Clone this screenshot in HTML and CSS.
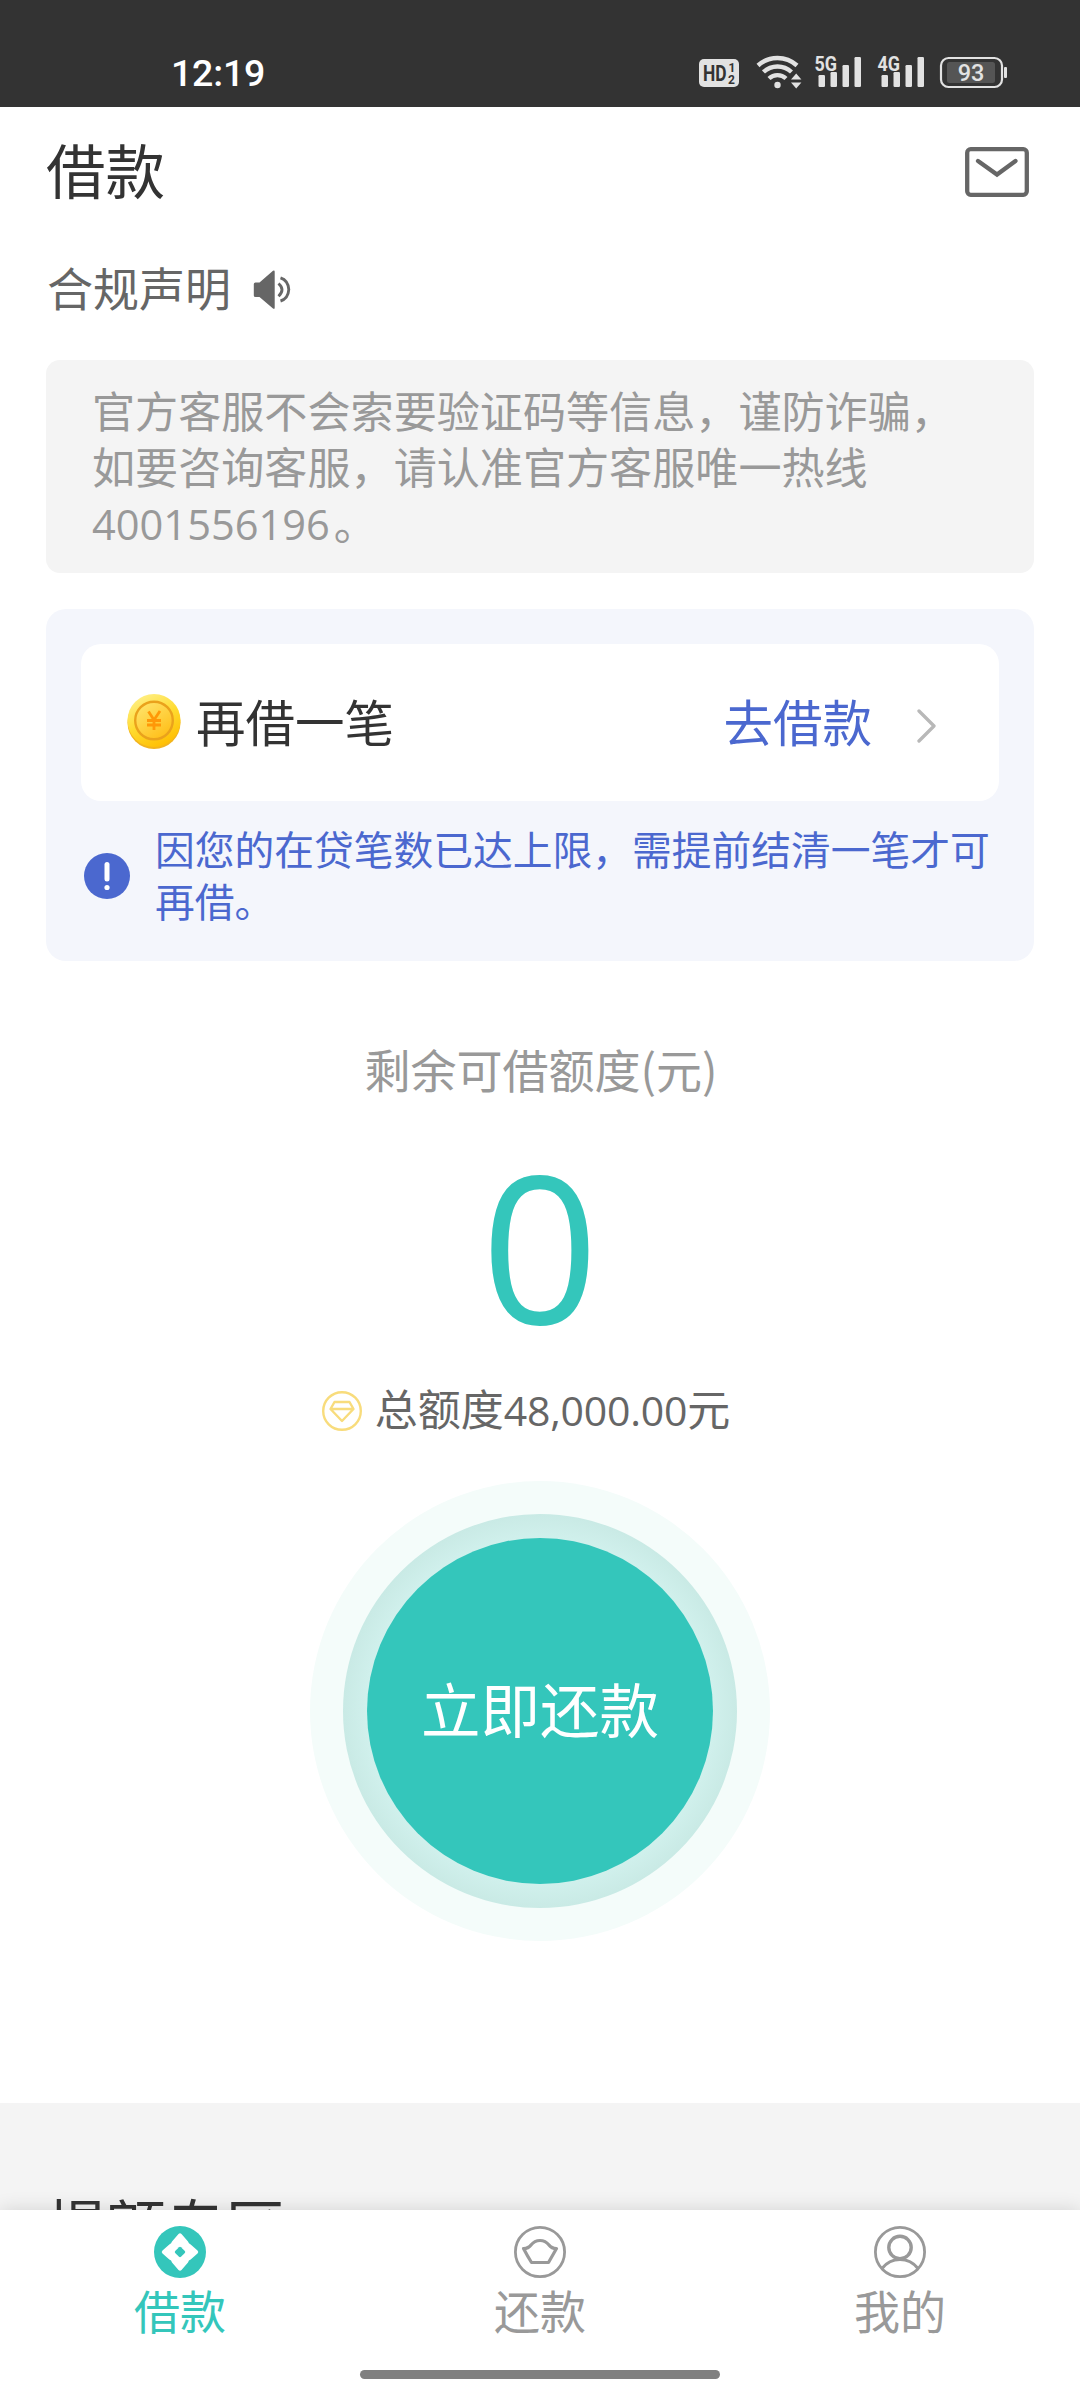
FILE: index.html
```html
<!DOCTYPE html>
<html lang="zh-CN">
<head>
<meta charset="utf-8">
<meta name="viewport" content="width=1080">
<title>借款</title>
<link rel="stylesheet" href="styles.css">
</head>
<body>
<div class="screen">
  <div class="status">
    <span class="clock">12:19</span>
    <svg class="status-icons" width="320" height="40" viewBox="695 50 320 40">
      <rect x="699" y="59" width="40" height="28" rx="5" fill="#e2e2e2"/>
      <g fill="#333" font-family="Roboto, sans-serif" font-weight="700">
        <text x="703" y="81" font-size="22.5" textLength="23.5" lengthAdjust="spacingAndGlyphs">HD</text>
        <text x="728.5" y="71.5" font-size="12">1</text>
        <text x="728" y="83.500" font-size="12">2</text>
      </g>
      <g fill="none" stroke="#e2e2e2" stroke-width="4.4">
        <path d="M758 65.5a29 29 0 0 1 39 0"/>
        <path d="M763.5 72a20.500 20.500 0 0 1 28 0"/>
        <path d="M769 78.500a12.500 12.500 0 0 1 17 0"/>
      </g>
      <circle cx="777.500" cy="85" r="3.200" fill="#e2e2e2"/>
      <path d="M791 79.500l5.200-6 5.200 6zM791 82.500l5.200 6 5.200-6z" fill="#e2e2e2"/>
      <g fill="#e2e2e2">
        <text x="814.500" y="70.500" font-family="Roboto, sans-serif" font-weight="700" font-size="21" textLength="22.500" lengthAdjust="spacingAndGlyphs">5G</text>
        <rect x="818.500" y="75" width="6.500" height="12" rx="1.200"/>
        <rect x="830.500" y="72" width="6.500" height="15" rx="1.200"/>
        <rect x="842.500" y="65" width="6.500" height="22" rx="1.200"/>
        <rect x="854.500" y="57" width="6.500" height="30" rx="1.200"/>
        <text x="877.500" y="70.500" font-family="Roboto, sans-serif" font-weight="700" font-size="21" textLength="22.500" lengthAdjust="spacingAndGlyphs">4G</text>
        <rect x="881.500" y="75" width="6.500" height="12" rx="1.200"/>
        <rect x="893.500" y="72" width="6.500" height="15" rx="1.200"/>
        <rect x="905.500" y="65" width="6.500" height="22" rx="1.200"/>
        <rect x="917.500" y="57" width="6.500" height="30" rx="1.200"/>
      </g>
      <rect x="941" y="58" width="61" height="29" rx="7.500" fill="none" stroke="#e2e2e2" stroke-width="2.200"/>
      <rect x="947" y="62" width="48" height="21" rx="2.500" fill="#555"/>
      <rect x="1004" y="67" width="3" height="11" rx="1" fill="#e2e2e2"/>
      <text x="971" y="81" text-anchor="middle" font-family="Roboto, sans-serif" font-size="23.500" font-weight="500" fill="#e2e2e2">93</text>
    </svg>
  </div>

  <header class="header">
    <h1 class="title">借款</h1>
    <svg width="64" height="50" viewBox="0 0 64 50" fill="none" stroke="#666" stroke-width="4.300">
      <rect x="2.200" y="2.200" width="59.600" height="45.600" rx="3.500"/>
      <path d="M13 14l19 13.500L50.500 14" stroke-linecap="round"/>
    </svg>
  </header>

  <section class="compliance">
    <span class="t">合规声明</span>
    <svg width="38" height="39" viewBox="0 0 38 39">
      <path d="M2.500 12.500h4L20 .800q1.700-1 1.700 1v36q0 1.800-1.700.700L6.500 27h-4Q.800 27 .800 25.500V14q0-1.500 1.700-1.500z" fill="#666"/>
      <path d="M25.500 13.500q7 6.200 0 12.800M27.500 7.800q7.700 2.500 8.300 11.700-.600 9.200-8.300 11.500" fill="none" stroke="#666" stroke-width="2.900"/>
    </svg>
  </section>

  <p class="notice">官方客服不会索要验证码等信息，谨防诈骗，<br>如要咨询客服，请认准官方客服唯一热线<br><span class="hotline">4001556196</span>。</p>

  <section class="loan">
    <div class="loan-row">
      <svg class="coin" width="54" height="57" viewBox="0 0 54 57">
        <defs>
          <linearGradient id="rim" x1=".2" y1="0" x2=".7" y2="1"><stop offset="0" stop-color="#fff08a"/><stop offset=".5" stop-color="#ffdb30"/><stop offset="1" stop-color="#ffbd00"/></linearGradient>
          <linearGradient id="face" x1=".1" y1="0" x2=".8" y2="1"><stop offset="0" stop-color="#ffe66e"/><stop offset="1" stop-color="#ffbd15"/></linearGradient>
        </defs>
        <circle cx="27" cy="29.500" r="26.500" fill="#f2b41f"/>
        <circle cx="27" cy="27.500" r="26.500" fill="url(#rim)"/>
        <circle cx="27" cy="27.500" r="18.800" fill="url(#face)" stroke="#eaa21c" stroke-width="2.400"/>
        <path d="M21.500 18.500l5.500 8.500 6-9M27 27v10M20 27.500h14M20 32h14" fill="none" stroke="#ff9808" stroke-width="2.800"/>
      </svg>
      <span class="t loan-name">再借一笔</span>
      <span class="t loan-go">去借款</span>
      <svg class="chevron" width="19" height="34" viewBox="0 0 19 34"><path d="M2 2l15 15L2 32" fill="none" stroke="#b8b8b8" stroke-width="3.300" stroke-linecap="round" stroke-linejoin="round"/></svg>
    </div>
    <div class="tip">
      <svg width="46" height="46" viewBox="0 0 46 46"><circle cx="23" cy="23" r="23" fill="#4b68cf"/><path d="M23 11.500V26" stroke="#fff" stroke-width="5" stroke-linecap="round"/><circle cx="23" cy="34.500" r="2.600" fill="#fff"/></svg>
      <p class="tip-text">因您的在贷笔数已达上限，需提前结清一笔才可<br>再借。</p>
    </div>
  </section>

  <section class="quota">
    <div class="quota-label t">剩余可借额度(元)</div>
    <div class="quota-value">0</div>
    <div class="quota-total">
      <svg width="40" height="40" viewBox="0 0 40 40" fill="none" stroke="#f8dc7c"><circle cx="20" cy="20" r="18.800" stroke-width="2.400"/><path d="M12.500 11h15l4 7L20 30 8.500 18zM8.500 18h23" stroke-width="2.400" stroke-linejoin="round"/></svg>
      <span class="t">总额度<span class="amount">48,000.00</span>元</span>
    </div>
    <div class="halo"><div class="ring"><button class="repay"><span class="t">立即还款</span></button></div></div>
  </section>

  <section class="boost"><h2 class="t">提额专区</h2></section>

  <nav class="tabs">
    <a class="tab active">
      <svg width="52" height="52" viewBox="0 0 52 52"><circle cx="26" cy="26" r="26" fill="#34c6bb"/><path d="M24.500 8q1.500-1.500 3 0L34 15.500q.500 2.200 2.700 2.900L43.500 24.500q1.600 1.500 0 3L36.700 33.600q-2.200.700-2.700 2.900L27.500 44q-1.500 1.500-3 0L18 36.500q-.500-2.200-2.700-2.900L8.500 27.500q-1.600-1.500 0-3L15.300 18.400q2.200-.700 2.700-2.900z" fill="#fff"/><path d="M25 21.200q1-.900 2 0l3.800 3.800q.900 1 0 2L27 30.800q-1 .900-2 0L21.200 27q-.900-1 0-2z" fill="#34c6bb"/></svg>
      <span class="t">借款</span>
    </a>
    <a class="tab">
      <svg width="52" height="52" viewBox="0 0 52 52" fill="none" stroke="#999"><circle cx="26" cy="26" r="24.600" stroke-width="2.800"/><path d="M9.500 22.500q5 0 7.500-3.500 3.500-4.500 9-4.500t9 4.500q2.500 3.500 7.500 3.500L34.500 36.500h-17Q14 31 9.500 22.500z" stroke-width="3.200" stroke-linejoin="round"/></svg>
      <span class="t">还款</span>
    </a>
    <a class="tab">
      <svg width="52" height="52" viewBox="0 0 52 52" fill="none" stroke="#999"><circle cx="26" cy="26" r="24.600" stroke-width="2.800"/><circle cx="26" cy="21.500" r="11.200" stroke-width="3.400"/><path d="M8 42.500q7-9 18-9t18 9" stroke-width="3.200"/></svg>
      <span class="t">我的</span>
    </a>
    <div class="home-bar"></div>
  </nav>
</div>
</body>
</html>
```
FILE: styles.css
```css
* { box-sizing: border-box; margin: 0; padding: 0; }
body {
  font-family: "Noto Sans CJK SC", sans-serif;
  background: #fff;
  color: #333;
}
svg { display: block; flex: none; }
.screen {
  position: relative;
  width: 1080px;
  height: 2400px;
  overflow: hidden;
  display: flex;
  flex-direction: column;
}
/* Trims the line box so that ideographs sit on its centre */
.t, .title { display: block; line-height: 1; padding-bottom: .11em; white-space: nowrap; font-weight: 400; }

.status {
  flex: none;
  height: 107px;
  padding: 33px 65px 0 171px;
  background: #333;
  display: flex;
  justify-content: space-between;
}
.clock { font: 500 37.500px/80px Roboto, sans-serif; color: #fff; letter-spacing: -.2px; }
.status-icons { margin-top: 17px; }

.header {
  flex: none;
  height: 130px;
  padding: 0 51px 0 46px;
  display: flex;
  align-items: center;
  justify-content: space-between;
}
.title { font-size: 59.500px; }

.compliance {
  flex: none;
  height: 123px;
  padding: 0 46px 19px 47px;
  display: flex;
  align-items: center;
  gap: 22px;
  font-size: 46px;
  color: #666;
}

.notice {
  flex: none;
  margin: 0 46px;
  height: 213px;
  padding: 21px 46px 0;
  border-radius: 14px;
  background: #f4f4f4;
  color: #999;
  font-size: 43.100px;
  line-height: 56.200px;
  white-space: nowrap;
}
.hotline { font-family: "Open Sans", sans-serif; font-size: 41.600px; margin-right: 4px; line-height: 1; }

.loan {
  flex: none;
  margin: 36px 46px 0;
  height: 352px;
  padding: 35px 35px 0;
  border-radius: 20px;
  background: #f4f6fc;
}
.loan-row {
  height: 157px;
  padding: 2px 63px 0 46px;
  border-radius: 20px;
  background: #fff;
  display: flex;
  align-items: center;
  font-size: 49.500px;
}
.coin { margin-bottom: 4px; }
.chevron { margin-top: 4px; }
.loan-name { margin-left: 15px; }
.loan-go { margin: 0 45px 0 auto; color: #4b68cf; }
.tip {
  padding: 21px 0 0 3px;
  display: flex;
  align-items: center;
  gap: 25px;
}
.tip-text { color: #4b68cf; font-size: 39.760px; line-height: 52px; padding-bottom: 3px; white-space: nowrap; }

.quota {
  flex: none;
  display: flex;
  flex-direction: column;
  align-items: center;
}
.quota-label { margin: 84px 0 0 2px; font-size: 46px; color: #999; height: 52px; }
.quota-value { margin-top: 44px; font: 206px/206px "Open Sans", sans-serif; color: #34c6bb; }
.quota-total {
  margin: 40px 28px 0 0;
  height: 48px;
  display: flex;
  align-items: center;
  gap: 13px;
  font-size: 43px;
  color: #666;
}
.amount { font-family: "Open Sans", sans-serif; font-size: 41px; line-height: 1; letter-spacing: -.2px; }
.halo, .ring, .repay { display: flex; align-items: center; justify-content: center; border-radius: 50%; }
.halo { margin-top: 46px; width: 460px; height: 460px; background: #f4fcfa; }
.ring { width: 394px; height: 394px; background: radial-gradient(circle closest-side, #d0f0ec 88%, #c9eae5 100%); }
.repay {
  width: 346px;
  height: 346px;
  border: 0;
  background: #34c6bb;
  color: #fff;
  font: 400 59.500px "Noto Sans CJK SC", sans-serif;
}

.boost {
  flex: none;
  margin-top: 162px;
  height: 297px;
  padding: 91px 46px 0 47px;
  background: #f4f4f4;
}
.boost h2 { font-size: 59.500px; }

.tabs {
  position: absolute;
  left: 0;
  right: 0;
  bottom: 0;
  height: 190px;
  padding-top: 16px;
  background: #fff;
  box-shadow: 0 0 18px rgba(0, 0, 0, .14);
  display: grid;
  grid-template-columns: repeat(3, 1fr);
  grid-template-rows: 144px 9px;
  justify-items: center;
}
.tab { display: flex; flex-direction: column; align-items: center; gap: 8px; font-size: 46px; color: #999; }
.tab.active { color: #34c6bb; }
.home-bar { grid-column: 1 / -1; width: 360px; height: 9px; border-radius: 5px; background: #808080; }
```
